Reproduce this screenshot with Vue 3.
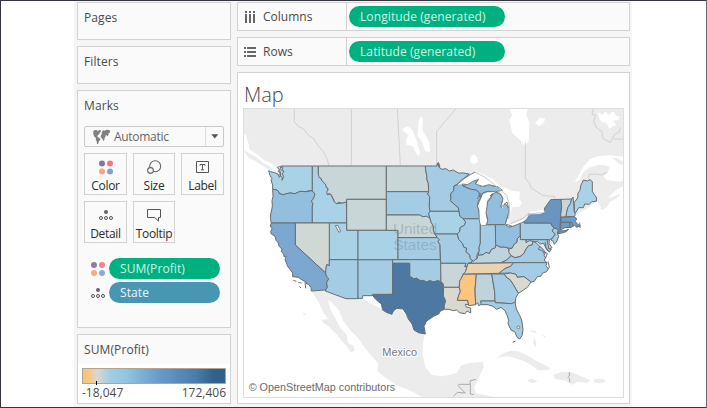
<script setup>
const tools = ['Color', 'Size', 'Label', 'Detail', 'Tooltip']

const palette = {
  pale: '#aad2e7',
  light: '#a4cce4',
  mid: '#93bfdf',
  coast: '#7ba7d0',
  coast2: '#6e9cc7',
  deep: '#6995bf',
  navy: '#4d78a2',
  grey: '#c8d6d7',
  sand: '#d9d9d1',
  sage: '#cfd8d4',
  orange: '#fec580',
  mist: '#bed4dd',
  peach: '#ead2b2',
}

const states = [
  { id: 'WA', c: 'pale', p: '86,212 92,215 104,218 114,222 118,232 122,225 119,211 123,198 217,198 217,272 207,272 198,275 180,274 165,281 150,279 140,281 130,284 118,281 115,273 108,269 98,268 98,255 93,240 96,236 90,226' },
  { id: 'OR', c: 'mid', p: '98,268 108,269 115,273 118,281 130,284 140,281 150,279 165,281 180,274 198,275 217,272 220,277 225,281 223,290 218,299 214,303 219,311 217,318 217,369 94,369 91,355 92,342 95,330 97,318 96,302 99,290' },
  { id: 'ID', c: 'pale', p: '217,198 235,198 235,222 246,242 258,255 264,265 262,284 272,282 283,305 289,311 307,309 319,306 320,369 217,369 217,318 219,311 214,303 218,299 223,290 225,281 220,277 217,272' },
  { id: 'MT', c: 'grey', p: '235,198 439,198 439,298 320,298 319,306 307,309 295,307 289,311 283,305 280,296 272,282 267,281 262,284 260,276 264,270 264,265 258,262 258,255 246,242 243,235 237,232 235,222' },
  { id: 'WY', c: 'grey', p: '320,298 439,298 439,391 320,391' },
  { id: 'UT', c: 'pale', p: '268,369 320,369 320,391 354,391 354,479 268,479' },
  { id: 'NV', c: 'sage', p: '166,369 268,369 268,479 268,497 260,494 258,505 257,519 166,435' },
  { id: 'CA', c: 'coast', p: '94,369 166,369 166,435 257,519 259,528 266,536 260,548 262,562 257,570 214,573 213,563 206,553 200,552 196,544 183,538 175,532 158,530 158,519 151,509 143,499 135,478 139,470 132,470 131,462 124,455 126,447 118,440 114,428 108,421 105,409 94,402 92,395 96,386 91,378' },
  { id: 'AZ', c: 'light', p: '268,479 354,479 354,596 318,596 256,573 257,570 262,562 260,548 266,536 259,528 257,519 258,505 260,494 268,497' },
  { id: 'NM', c: 'light', p: '354,479 458,479 458,583 397,583 397,587 368,587 368,595 354,595' },
  { id: 'CO', c: 'pale', p: '354,391 474,391 474,479 354,479' },
  { id: 'ND', c: 'grey', p: '439,198 556,198 557,210 560,225 561,240 565,250 566,275 439,275' },
  { id: 'SD', c: 'light', p: '439,275 566,275 563,282 569,290 568,320 570,334 566,341 570,355 560,349 548,350 539,345 439,345' },
  { id: 'NE', c: 'grey', p: '439,345 539,345 548,350 560,349 570,355 574,368 580,378 580,391 585,403 592,413 474,413 474,391 439,391' },
  { id: 'KS', c: 'light', p: '474,413 592,413 598,419 594,425 600,434 601,479 474,479' },
  { id: 'OK', c: 'light', p: '458,479 601,479 603,491 603,547 595,542 580,546 570,542 560,546 549,541 541,542 530,535 521,536 509,529 509,490 458,490' },
  { id: 'TX', c: 'navy', p: '458,490 509,490 509,529 521,536 530,535 541,542 549,541 560,546 570,542 580,546 595,542 609,550 610,588 617,602 613,617 613,628 600,634 596,642 582,648 570,656 558,665 552,680 556,702 535,698 522,690 516,672 505,657 499,643 489,627 471,625 461,632 456,643 441,638 428,630 424,612 407,598 397,585 458,583' },
  { id: 'MN', c: 'light', p: '556,198 591,198 591,190 596,192 597,202 606,208 618,206 628,213 640,210 655,219 670,219 688,222 665,240 652,252 642,258 641,272 632,281 633,295 631,302 643,313 655,323 657,334 570,334 568,320 569,290 563,282 566,275 565,250 561,240 560,225 557,210' },
  { id: 'IA', c: 'pale', p: '570,334 657,334 660,349 672,357 677,366 673,376 660,383 660,393 652,402 585,402 580,391 580,378 574,368 570,355 566,341' },
  { id: 'MO', c: 'light', p: '585,402 652,402 656,418 668,431 672,442 680,444 678,455 690,466 690,475 697,481 693,489 684,490 683,499 674,500 678,490 602,490 600,434 594,425 598,419 592,413' },
  { id: 'AR', c: 'grey', p: '602,490 678,490 674,500 681,500 677,514 670,522 664,535 659,543 658,562 611,562 609,550 603,547' },
  { id: 'LA', c: 'sand', p: '611,562 658,562 661,574 656,587 652,601 683,601 686,614 676,613 679,621 692,624 692,639 681,633 675,641 658,638 650,630 640,632 627,628 613,628 613,617 617,602 610,588' },
  { id: 'MS', c: 'orange', p: '670,522 709,522 705,570 707,614 686,617 683,601 652,601 656,587 661,574 658,562 659,543 664,535' },
  { id: 'AL', c: 'mist', p: '709,522 755,522 764,575 765,603 722,603 725,613 716,617 713,608 707,614 705,570' },
  { id: 'TN', c: 'peach', p: '684,490 821,488 812,499 798,504 788,511 777,520 670,522 677,514 681,500' },
  { id: 'KY', c: 'mist', p: '693,489 700,480 711,477 714,465 729,464 738,457 748,460 754,448 766,443 768,434 780,441 793,441 804,444 810,457 813,468 800,480 784,488 684,490' },
  { id: 'IL', c: 'light', p: '669,356 718,356 721,375 721,430 717,443 718,451 711,464 710,475 700,484 690,475 690,466 678,455 680,444 672,442 668,431 656,418 652,402 660,393 660,383 673,376 677,366' },
  { id: 'WI', c: 'mid', p: '642,258 653,254 666,248 668,257 678,262 695,268 709,270 718,278 717,290 724,288 715,303 712,318 716,330 718,356 669,356 660,349 655,323 643,313 631,302 633,295 632,281 641,272' },
  { id: 'MIU', c: 'mid', p: '668,257 684,253 697,243 715,238 706,249 718,257 730,260 747,254 759,258 776,261 780,272 790,272 778,276 758,275 744,274 730,278 722,291 718,278 709,270 695,268 678,262' },
  { id: 'MIL', c: 'mid', p: '738,374 743,362 741,350 736,335 740,320 742,307 752,296 755,286 766,276 778,280 786,290 789,300 787,312 782,319 787,323 796,309 804,322 808,344 801,357 796,374' },
  { id: 'IN', c: 'light', p: '721,375 766,374 767,434 766,443 754,448 748,460 738,457 729,464 714,465 718,451 717,443 721,430' },
  { id: 'OH', c: 'mid', p: '766,374 796,374 806,381 818,379 841,369 841,407 832,416 831,427 823,432 816,445 804,444 793,441 780,441 767,434' },
  { id: 'PA', c: 'light', p: '841,369 853,365 853,369 932,369 936,378 943,384 936,393 946,402 935,416 928,419 841,419' },
  { id: 'NY', c: 'deep', p: '853,369 853,364 867,348 867,341 883,336 910,339 914,324 932,299 963,298 965,321 962,345 960,388 956,394 948,391 943,384 936,378 932,369' },
  { id: 'LI', c: 'deep', p: '949,401 960,393 975,392 986,388 978,395 962,400' },
  { id: 'VT', c: 'grey', p: '963,298 995,297 991,311 984,322 980,337 978,350 963,352 962,345 965,321' },
  { id: 'NH', c: 'light', p: '995,297 999,291 1001,310 1003,335 1006,343 1003,350 978,350 980,337 984,322 991,311' },
  { id: 'ME', c: 'pale', p: '1003,307 1013,294 1014,279 1020,271 1022,258 1030,240 1042,243 1050,239 1057,245 1057,274 1063,284 1070,294 1069,304 1055,305 1048,313 1034,312 1030,323 1016,323 1006,339 1003,335' },
  { id: 'MA', c: 'coast2', p: '963,352 1003,350 1010,356 1006,365 1013,373 1021,377 1010,382 1004,376 998,377 993,367 963,367' },
  { id: 'CT', c: 'coast2', p: '963,367 989,367 990,382 974,383 961,391' },
  { id: 'RI', c: 'coast2', p: '989,367 995,367 1000,379 991,383' },
  { id: 'NJ', c: 'light', p: '943,384 955,389 952,399 956,409 951,423 943,433 939,423 933,420 946,402 936,393' },
  { id: 'MD', c: 'light', p: '857,419 922,419 927,446 934,447 928,456 920,449 915,438 910,430 901,432 893,425 879,425 864,428' },
  { id: 'DE', c: 'sand', p: '921,420 928,419 927,431 936,443 927,447' },
  { id: 'WV', c: 'sage', p: '841,419 857,419 858,428 868,422 880,424 876,435 866,437 858,447 852,460 840,470 825,473 813,467 806,456 808,446 816,445 823,432 831,427 832,416 841,407' },
  { id: 'VA', c: 'light', p: '784,488 800,480 813,467 825,473 840,470 852,460 858,447 866,437 876,435 880,424 890,430 900,440 908,446 916,458 912,466 917,474 912,480 921,488' },
  { id: 'NC', c: 'light', p: '821,488 921,488 918,497 925,506 920,515 908,519 903,528 891,531 883,544 873,546 852,530 832,532 828,523 811,519 777,520 788,511 798,504 812,499' },
  { id: 'SC', c: 'sand', p: '792,522 811,519 828,523 832,532 852,530 873,546 863,561 849,571 835,580 828,568 820,554 810,539 801,534' },
  { id: 'GA', c: 'light', p: '755,522 792,522 801,534 810,539 820,554 828,568 835,580 828,592 825,610 815,611 765,608 764,575' },
  { id: 'FL', c: 'light', p: '722,603 765,603 766,608 815,611 825,606 829,627 838,644 845,660 849,688 846,707 839,717 832,713 824,695 813,690 804,671 806,661 802,648 795,632 783,622 770,628 759,619 744,614 724,614' },
]
</script>

<template>
  <div class="frame">
    <div class="app">
      <aside class="side">
        <section class="card shelf"><h2>Pages</h2></section>
        <section class="card shelf"><h2>Filters</h2></section>
        <section class="card marks">
          <h2>Marks</h2>
          <div class="select">
            <svg class="globe" width="18" height="15" viewBox="0 0 54 45">
              <path d="M1 6l5-3 6 1 3 3 3-4 5 1 1 4-4 3-1 5-4 2-2 4 2 3 6 3 1 5-4 4-2 6-1 3-3-1-1-8-3-5 1-5-5-4-3-7zM27 9l3-5 5 1 3-2 7-1 7 3-2 6-3 2-1 6-3 3-3-4-2 2-2-4 2 6-3 4-1 7-3 3-3-7-5-5 1-6 3-3-1-3z" fill="#808080" />
            </svg>
            <span class="value">Automatic</span>
            <span class="drop"><svg width="8" height="5"><path d="M.3 .2h7L3.8 4.4z" fill="#555" /></svg></span>
          </div>
          <div class="tools">
            <div v-for="t in tools" :key="t" class="tool">
              <svg v-if="t === 'Color'" width="16" height="16"><circle cx="4" cy="4.6" r="3" fill="#8a739d" /><circle cx="12" cy="4.6" r="3" fill="#fa7583" /><circle cx="4" cy="12.5" r="3" fill="#f3a77b" /><circle cx="12" cy="12.5" r="3" fill="#7ea4cd" /></svg>
              <svg v-else-if="t === 'Size'" width="16" height="16" fill="none" stroke="#666" stroke-width="1.1"><circle cx="9.2" cy="7.2" r="5.5" /><circle cx="4.5" cy="11.5" r="2.9" fill="#fafafa" /></svg>
              <svg v-else-if="t === 'Label'" width="16" height="16" fill="none" stroke="#555"><path d="M1.5 2.5h12v11h-12zM5 6.7V5.5h5v1.2M7.5 5.5v5M6 10.8h3" /></svg>
              <svg v-else-if="t === 'Detail'" width="16" height="16" fill="none" stroke="#555"><circle cx="8" cy="5" r="2" fill="#666" stroke="none" /><circle cx="3" cy="11" r="1.5" /><circle cx="8" cy="11" r="1.5" /><circle cx="13" cy="11" r="1.5" /></svg>
              <svg v-else width="16" height="16" fill="none" stroke="#555"><path d="M1.5 2.5h13v8h-2v3.7L8.7 10.5H1.5z" /></svg>
              <span>{{ t }}</span>
            </div>
          </div>
          <div class="encodings">
            <div class="enc">
              <svg width="16" height="16"><circle cx="4" cy="4" r="3" fill="#917aa2" /><circle cx="12" cy="4" r="3" fill="#f9808c" /><circle cx="4" cy="12" r="3" fill="#f1ad85" /><circle cx="12" cy="12" r="3" fill="#8aabd3" /></svg>
              <span class="pill">SUM(Profit)</span>
            </div>
            <div class="enc">
              <svg width="16" height="16" fill="none" stroke="#555"><circle cx="8" cy="5" r="2" fill="#666" stroke="none" /><circle cx="3" cy="11" r="1.5" /><circle cx="8" cy="11" r="1.5" /><circle cx="13" cy="11" r="1.5" /></svg>
              <span class="pill blue">State</span>
            </div>
          </div>
        </section>
        <section class="card legend">
          <h2>SUM(Profit)</h2>
          <div class="scale">
            <div class="ramp"><i></i></div>
            <div class="ends"><span>-18,047</span><span>172,406</span></div>
          </div>
        </section>
      </aside>

      <main class="main">
        <section class="card row">
          <div class="name">
            <svg width="12" height="12" fill="#666"><path d="M1 0h2v2H1zM5 0h2v2H5zM9 0h2v2H9zM1 3h2v9H1zM5 3h2v9H5zM9 3h2v9H9z" /></svg>
            <span>Columns</span>
          </div>
          <span class="pill wide">Longitude (generated)</span>
        </section>
        <section class="card row">
          <div class="name">
            <svg width="12" height="12" fill="#666"><path d="M0 1h2v2H0zM3 1h9v2H3zM0 5h2v2H0zM3 5h9v2H3zM0 9h2v2H0zM3 9h9v2H3z" /></svg>
            <span>Rows</span>
          </div>
          <span class="pill wide">Latitude (generated)</span>
        </section>
        <section class="card sheet">
          <h1>Map</h1>
          <svg class="map" width="381" height="290" viewBox="9 24 1143 870">
            <rect x="9" y="24" width="1143" height="870" fill="#fff" />
            <g fill="#ececec">
              <path d="M9 24H1152V170L1110 166 1075 168 1050 178 1030 200 1004 247 1020 240 1045 216 1065 202 1090 195 1110 200 1102 220 1090 228 1100 240 1120 242 1140 245 1152 240V256L1128 270 1108 290 1092 302 1088 318 1085 325 1070 304 1050 320 1000 350 950 400 900 500H300L110 205 90 188 75 183 60 170 48 160 36 153 20 150 28 138 22 120 14 104 9 95Z" />
              <path d="M1030 215l18-12 25-8 18 1-2 14-20 8-23 7-17 12-12 6zM1085 318l5-14 12-10 13-2 22-10 3 5-18 13-12 5-9 15-12 10-8-2zM1115 172l18 3 19 12v8l-15-4z" />
              <path d="M12 150l18 12 20 10 20 17 20 10 13 12-15-1-25-15-19-13-17-8-8-10z" />
              <path d="M214 573L257 573 318 596H368L430 630 456 643 480 625 500 650 522 690 555 702 548 735 548 765 556 800 575 825 605 829 628 825 650 818 665 795 695 788 730 786 731 803 719 825 713 845 703 858 706 880 740 886 760 890V894H552L515 874 470 856 432 830 412 812 414 790 395 768 375 745 355 715 330 690 308 660 298 632 276 608 264 600 270 626 285 654 300 682 320 705 324 728 340 738 344 750 333 758 318 736 304 722 292 704 278 692 268 680 249 668 245 659 264 658 247 632 236 606Z" />
              <path d="M770 774l22-15 20-6 22 1 25 10 25 16 25 12 22 13-9 6-30-1-8-8-30-18-28-9-20-6-20 1zM940 824l26-9 35 3 25 12 25 10-10 8-30-2-15 8-20-12-30-4zM1065 837h27l5 8-17 5-20-3zM863 839l15-2 15 6-13 7-13-3zM870 690l18 4 2 6-14-3zM884 713l5 20-4 10-6-16zM900 700l18 10-4 3zM188 638l7 2 3 6-9-3z" />
            </g>
            <g fill="#fff">
              <path d="M535 65l7-17 6 10-1 33 9 14 12 22 2 30-14-4-13-33-10-12zM485 88l18-9 14 10 12 30 12 40-7 9-11-18-6-12-17-4-2-14 7-14zM807 24l57 1-6 18 10 25-2 55-11 14-16-18-22-20-9-40 9-13zM885 70l15-17 16 3-5 12-12 10zM692 170l10-8 10 10 1 14-11 7-12-7zM1073 35l14 10 10-10 8 10 15-11 9 14 10 1-4 11-16 2 10 14-13 4-8 6-9-18-13-2-7-8zM17 100l4 12-3 15 10 20 11 9-15-1-12-19z" />
            </g>
            <g fill="none" stroke="#d1d1d1" stroke-width="3">
              <path d="M163 24V66L176 80 190 86 207 107 220 115 235 138 250 155 262 178 266 196M334 24V196M472 24L481 196M648 26L590 94V190M856 127V235L868 249 874 264 908 286 944 290 944 297M1060 25l-4 18 11 2-6 20 10 20 14 8 4 23 22 11 13-24 13-6 5-15M1122 117h30M1045 236l2-12 20-2 18 3 15-8" />
            </g>
            <g stroke="#686e72" stroke-width="3" stroke-linejoin="round">
              <polygon v-for="s in states" :key="s.id" :points="s.p" :fill="palette[s.c]" />
            </g>
            <path d="M592 196l3-9 5 13zM119 200l-7 2 6 7-4 6 7 2-2 9 8 6-1 9 5-11-4-8 5-9-7-2 4-9zM1008 378l5 1M1019 368l1 16M160 541l9 3M175 547l9 2M195 545l2 20M178 559l5 5M818 727l9-4M900 438l-5 10 12 4 5 9M915 426l3 17 8 10M910 455l12 5-5 14M924 484l4 18-5 6" fill="none" stroke="#6c7175" stroke-width="3" />
            <g fill="#fff">
              <path d="M650 255L672 236 691 224 705 214 735 226 760 237 772 252 788 266 795 263 815 272 840 275 838 296 846 310 838 320 816 322 810 346 806 374 820 370 865 350 870 336 910 328 914 336 900 342 870 343 858 358 841 370 820 379 796 374 804 352 808 342 803 316 794 309 788 324 782 319 790 302 785 285 771 276 755 283 740 300 741 320 738 340 742 362 738 374 724 376 719 360 720 330 718 310 727 290 738 278 760 275 780 272 775 261 747 255 728 260 706 253 716 239 698 244 683 254 667 252Z" />
              <path d="M286 377l7-1 9 18-5 3z" stroke="#777" stroke-width="3" />
              <circle cx="835" cy="682" r="4" stroke="#777" stroke-width="3" />
            </g>
            <g fill="none" stroke="#777d80" stroke-width="3">
              <path d="M650 255L672 236 691 224 705 216M667 252l16 2 15-10 18-6-10 14 22 7 19-5 28 7 12 10-20 4-25 0-22 8-8 14M740 374l3-12-5-24 3-18 2-16 12-16 10-11 15 3 9 15-5 18-1 9 8-8 10-8 7 25-7 23-5 18 22 7 25-10M712 318l13-30M750 288l8-8" />
            </g>
            <path d="M705 216l30 16 28 22 20 17 17 15 4 15 5 15-3 42M812 371l38-16 13-13 42-4" fill="none" stroke="#bcbcbc" stroke-width="2.5" />
            <path d="M641 889l11-12 24 2-22-22 3-4h33l1-11 17-4M691 853v29l10 2M988 816v12l-4 4 5 5v10" fill="none" stroke="#aaa" stroke-width="3" />
            <g class="country"><text x="459" y="402">United</text><text x="460" y="451">States</text></g>
            <text class="mexico" x="427" y="768">Mexico</text>
            <text class="credit" x="26" y="872">© OpenStreetMap contributors</text>
            <rect x="10.5" y="25.5" width="1140" height="867" fill="none" stroke="#dedede" stroke-width="3" />
          </svg>
        </section>
      </main>
    </div>
  </div>
</template>

<style>
body { margin: 0; background: #fff; }
</style>

<style scoped>
* { box-sizing: border-box; }
.frame {
  width: 707px; height: 408px; padding: 0 0 0 73px;
  border: 1px solid #35343f; border-right-color: #6a6a75;
  font: 12px/16px "Open Sans", "Liberation Sans", sans-serif; color: #4b4b4b;
}
.app { display: flex; gap: 6px; width: 558px; height: 406px; padding: 1px 2px 3px 3px; background: #f5f5f5; }
.side { width: 154px; display: flex; flex-direction: column; gap: 6px; }
.main { width: 393px; display: flex; flex-direction: column; gap: 6px; }
.card { border: 1px solid #d2d2d2; background: #fafafa; }
h2 { margin: 0; font-size: 12px; font-weight: 400; line-height: 16px; letter-spacing: .1px; }
.shelf { height: 38px; padding: 7px 6px; }
.marks { height: 238px; padding: 7px 6px; }
.select { display: flex; align-items: center; height: 21px; margin-top: 12px; border: 1px solid #c9c9c9; border-radius: 2px; padding-left: 8px; color: #666; }
.value { flex: 1; padding-left: 3px; letter-spacing: -.3px; }
.drop { width: 18px; height: 19px; border-left: 1px solid #dcdcdc; display: flex; align-items: center; justify-content: center; }
.tools { display: grid; grid-template-columns: 43px 42px 43px; grid-auto-rows: 42px; gap: 6px; margin-top: 6px; }
.tool { border: 1px solid #d2d2d2; display: flex; flex-direction: column; align-items: center; padding-top: 5px; gap: 3px; color: #2c2c2c; letter-spacing: -.3px; white-space: nowrap; }
.tool svg { flex: none; }
.encodings { display: flex; flex-direction: column; gap: 3px; margin-top: 15px; }
.enc { display: flex; align-items: center; gap: 3px; padding-left: 6px; }
.pill { width: 111px; height: 21px; padding-left: 11px; border-radius: 11px; background: #00b180; color: #d0f2e8; line-height: 21px; white-space: nowrap; letter-spacing: .1px; }
.blue { background: #4996b2; color: #edf5f8; }
.legend { height: 70px; display: flex; flex-direction: column; }
.legend h2 { height: 29px; padding: 7px 6px 0; }
.scale { flex: 1; background: #fff; padding: 4px 4px 0; }
.ramp { height: 16px; border: 1px solid #aaa796; padding: 12px 0 0 13px; background: linear-gradient(90deg, #ffc16e 0, #f8c88a 5%, #d9d8d1 10%, #a1cee5 19%, #94c5e1 30%, #6a9dca 52%, #497bac 80%, #33618d 92%); }
.ramp i { display: block; width: 1px; height: 4px; background: #000; }
.ends { display: flex; justify-content: space-between; margin-top: 1px; }
.row { height: 29px; display: flex; align-items: center; gap: 2px; }
.name { width: 109px; height: 27px; padding-left: 6px; display: flex; align-items: center; gap: 7px; border-right: 1px solid #d2d2d2; }
.wide { width: 156px; }
.sheet { height: 332px; background: #fff; padding: 10px 5px 0; }
h1 { margin: 0; height: 25px; font-size: 20px; line-height: 23px; font-weight: 300; letter-spacing: 0; padding-left: 1px; }
.map { display: block; }
.map text { font-family: "Liberation Sans", Arial, sans-serif; letter-spacing: 0; }
.country { font-size: 46px; fill: #6e8793; fill-opacity: .4; }
.mexico { font-size: 33px; fill: #777; stroke: #fff; stroke-width: 6px; paint-order: stroke; }
.credit { font-size: 32.4px; fill: #6b6b6b; }
</style>
